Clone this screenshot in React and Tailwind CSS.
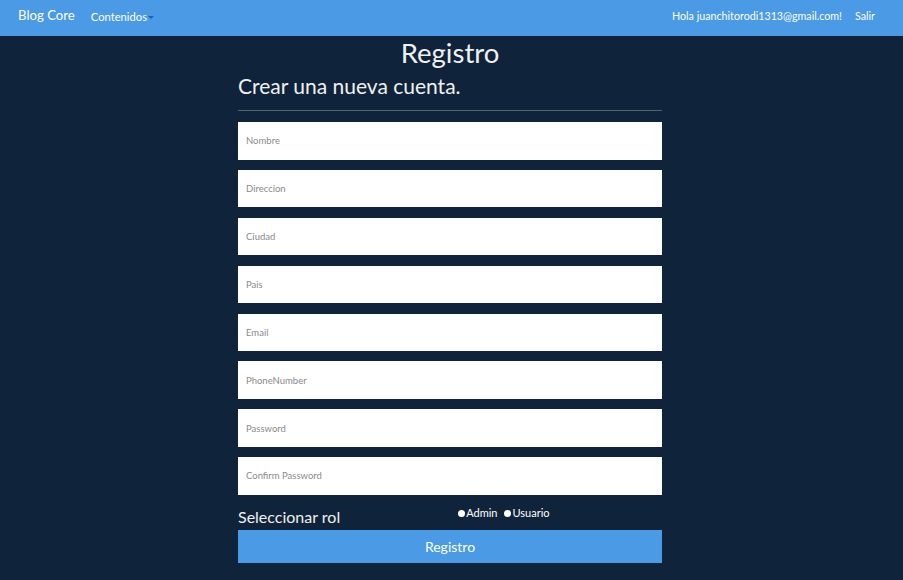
import { useState } from "react";

const campos = [
  "Nombre",
  "Direccion",
  "Ciudad",
  "Pais",
  "Email",
  "PhoneNumber",
  "Password",
  "Confirm Password",
];

const App = () => {
  const [rol, setRol] = useState("");

  return (
    <div className="min-h-[580px] w-full bg-[#0f243a] font-['Lato','Open_Sans',sans-serif]">
      <nav className="h-9 bg-[#4a9ae6] flex items-center px-[18px] pb-1 text-white">
        <span className="text-[13.2px] mr-4">Blog Core</span>
        <span className="text-[11.2px] flex items-center mt-0.5">
          Contenidos
          <span className="ml-px border-x-[3px] border-x-transparent border-t-[3px] border-t-[#1565c0] mt-0.5"></span>
        </span>
        <div className="ml-auto flex items-center text-[10.7px] pr-[10px]">
          <span>Hola juanchitorodi1313@gmail.com!</span>
          <span className="ml-[13px]">Salir</span>
        </div>
      </nav>

      <div className="w-[424px] ml-[238px]">
        <h2 className="text-center text-[27.5px] leading-8 text-[#f0f0f0] mt-px">Registro</h2>
        <h4 className="text-[21px] leading-6 text-[#f0f0f0] mt-[5px]">Crear una nueva cuenta.</h4>
        <hr className="border-t border-[#55626f] mt-[12px] mb-[11px]" />

        <form onSubmit={(e) => e.preventDefault()}>
          {campos.map((c) => (
            <input
              key={c}
              type={c.includes("Password") ? "password" : "text"}
              placeholder={c}
              className="block w-full h-[37.5px] mb-[10.4px] bg-white px-2 text-[9.5px] text-gray-700 placeholder:text-[#8a8a8a] outline-none"
            />
          ))}

          <div className="flex items-start h-[25px]">
            <span className="text-[16px] leading-6 text-[#f0f0f0]">Seleccionar rol</span>
            <div className="flex items-center text-[11px] leading-4 text-white ml-[118px]">
              <label className="flex items-center mr-[7px]" onClick={() => setRol("Admin")}>
                <span className="w-[7px] h-[7px] rounded-full bg-white mr-px"></span>Admin
              </label>
              <label className="flex items-center" onClick={() => setRol("Usuario")}>
                <span className="w-[7px] h-[7px] rounded-full bg-white mr-px"></span>Usuario
              </label>
            </div>
          </div>

          <button
            type="submit"
            className="w-full h-[33px] bg-[#4a9ae6] text-white text-[14px]"
          >
            Registro
          </button>
        </form>
      </div>
    </div>
  );
};

export default App;
